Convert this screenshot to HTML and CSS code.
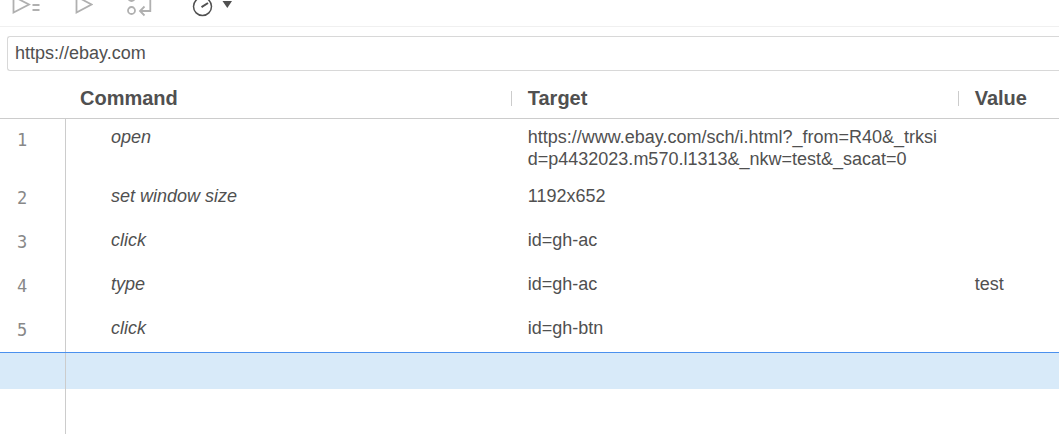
FILE: index.html
```html
<!DOCTYPE html>
<html lang="en">
<head>
<meta charset="utf-8">
<title>Test editor</title>
<link rel="stylesheet" href="styles.css">
</head>
<body>
<div class="toolbar">
  <button class="tool" type="button" aria-label="Run all tests">
    <svg width="29" height="26" viewBox="12 0 29 26"><path d="M13.500-3.500v16L29 4.500z"/><path class="thick" d="M32.500 5h7M32.500 10h7"/></svg>
  </button>
  <button class="tool" type="button" aria-label="Run current test">
    <svg width="18" height="26" viewBox="75 0 18 26"><path d="M76.500-3.500v16L91.500 4.500z"/></svg>
  </button>
  <button class="tool" type="button" aria-label="Step over current command">
    <svg width="26" height="26" viewBox="127 0 26 26"><circle cx="131.500" cy="-2.500" r="3.500"/><circle cx="131.500" cy="10.500" r="3.500"/><path d="M150.300-2v13H140.500M144.500 6.500L140 11l4.500 4.500"/></svg>
  </button>
  <button class="tool speed" type="button" aria-label="Test execution speed">
    <svg width="42" height="26" viewBox="191 0 42 26"><circle cx="202.500" cy="6.500" r="9"/><path class="thick" d="M201.500 7.200L208 3"/><path class="caret" d="M222.500 1H232l-4.700 7z"/></svg>
  </button>
</div>
<div class="address">
  <input class="url" type="text" aria-label="Base URL" value="https://ebay.com">
</div>
<table class="steps">
  <colgroup><col class="col-number"><col class="col-command"><col class="col-target"><col></colgroup>
  <thead>
    <tr><th></th><th class="first">Command</th><th><span class="split">Target</span></th><th><span class="split">Value</span></th></tr>
  </thead>
  <tbody>
    <tr class="tall"><td class="number">1</td><td class="command">open</td><td>https://www.ebay.com/sch/i.html?_from=R40&amp;_trksid=p4432023.m570.l1313&amp;_nkw=test&amp;_sacat=0</td><td></td></tr>
    <tr><td class="number">2</td><td class="command">set window size</td><td>1192x652</td><td></td></tr>
    <tr><td class="number">3</td><td class="command">click</td><td>id=gh-ac</td><td></td></tr>
    <tr><td class="number">4</td><td class="command">type</td><td>id=gh-ac</td><td>test</td></tr>
    <tr><td class="number">5</td><td class="command">click</td><td>id=gh-btn</td><td></td></tr>
    <tr class="selected"><td class="number"></td><td></td><td></td><td></td></tr>
  </tbody>
</table>
<div class="gutter"></div>
</body>
</html>
```
FILE: styles.css
```css
* {
  box-sizing: border-box;
}

body {
  display: flex;
  flex-direction: column;
  min-height: 100vh;
  margin: 0;
  overflow-x: hidden;
  background: #fff;
  color: #505050;
  font: 18px/22px "Liberation Sans", Arial, sans-serif;
}

.toolbar {
  display: flex;
  gap: 34px;
  height: 27px;
  padding-left: 12px;
  border-bottom: 1px solid #f0f0f0;
}

.tool {
  display: block;
  padding: 0;
  border: 0;
  background: none;
  color: #b0b0b0;
}

.speed {
  margin-left: 4px;
  color: #505050;
}

.tool svg {
  display: block;
  fill: none;
  stroke: currentColor;
  stroke-width: 1.8;
}

.speed svg {
  stroke-width: 1.5;
}

.tool .thick {
  stroke-width: 2;
}

.tool .caret {
  fill: currentColor;
  stroke: none;
}

.address {
  padding: 9px 0 7px 7px;
}

.url {
  display: block;
  width: 100%;
  height: 35px;
  padding: 0 7px;
  border: 1px solid #d8d8d8;
  border-right: 0;
  border-radius: 3px 0 0 3px;
  outline: 0;
  background: #fff;
  color: inherit;
  font: inherit;
}

.steps {
  width: 100%;
  border-spacing: 0;
  table-layout: fixed;
}

.col-number {
  width: 66px;
}

.col-command {
  width: 42%;
}

.col-target {
  width: 42.2%;
}

th {
  height: 41px;
  padding: 0;
  border-bottom: 1px solid #ccc;
  font-size: 20px;
  text-align: left;
}

.first {
  padding-left: 14px;
}

.split {
  display: flex;
  align-items: center;
}

.split::before {
  content: "";
  height: 15px;
  margin-right: 16px;
  border-left: 1px solid #ccc;
}

td {
  height: 44px;
  padding: 8px 16px 0 17px;
  vertical-align: top;
  word-break: break-all;
}

.tall td {
  height: 58px;
  padding-top: 7px;
}

.number {
  padding: 10px 0 0 17px;
  border-right: 1px solid #ccc;
  color: #888;
  font-family: "DejaVu Sans Mono", monospace;
  font-size: 17px;
}

.tall .number {
  padding-top: 10px;
}

.command {
  padding-left: 45px;
  font-style: italic;
}

.selected td {
  height: 36px;
  padding: 0;
  background: #d8eaf9;
  box-shadow: 0 -1px #4a90ee;
}

.gutter {
  flex: 1;
  width: 66px;
  border-right: 1px solid #ccc;
}
```
